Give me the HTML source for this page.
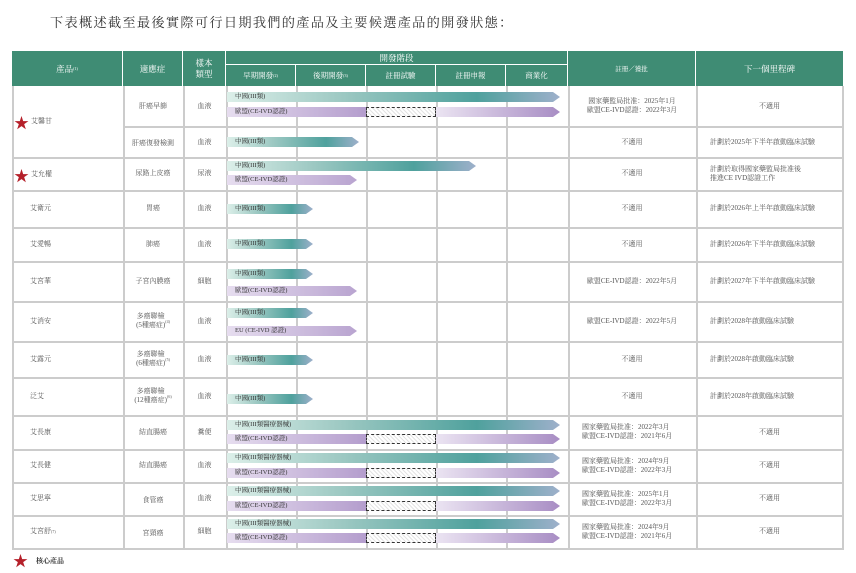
<!DOCTYPE html>
<html><head><meta charset="utf-8"><style>
*{margin:0;padding:0;box-sizing:border-box}
body{width:856px;height:573px;background:#fff;position:relative;overflow:hidden;font-family:"Liberation Serif","Noto Serif CJK SC","Noto Sans CJK TC",serif;color:#444}
.a{position:absolute}
.t{position:absolute;display:flex;align-items:center;justify-content:center;text-align:center;font-size:7px;line-height:9px;color:#555}
.l{justify-content:flex-start;text-align:left}
.h{position:absolute;background:#3f8c74;color:#fff;display:flex;align-items:center;justify-content:center;font-size:8.5px;border-right:1.5px solid #fff}
.v{position:absolute;top:86px;height:464px;width:1.5px;background:#ccc}
.hl{position:absolute;height:1.5px;background:#ccc;left:12px;width:831px}
.bar{position:absolute;height:10px;font-size:6.5px;line-height:10px;padding-left:8px;color:#333;white-space:nowrap}
.c{background:linear-gradient(90deg,#dcefe9 0%,#9cc8c2 35%,#4fa19d 75%,#9eb0cb 100%);clip-path:polygon(0 0,calc(100% - 7px) 0,100% 50%,calc(100% - 7px) 100%,0 100%)}
.p{background:linear-gradient(90deg,#e6ddef 0%,#b9a4d0 100%);clip-path:polygon(0 0,calc(100% - 7px) 0,100% 50%,calc(100% - 7px) 100%,0 100%)}
.p1{background:linear-gradient(90deg,#e6ddef 0%,#b49dcd 100%)}
.p2{background:linear-gradient(90deg,#ebe4f2 0%,#a88dc4 100%);clip-path:polygon(0 0,calc(100% - 7px) 0,100% 50%,calc(100% - 7px) 100%,0 100%)}
.d{position:absolute;height:10px;border:1px dashed #333;background:repeating-linear-gradient(45deg,#e4e4e4 0 1px,#fff 1px 3px)}
.star{color:#b5202a;font-size:15px;position:absolute}
</style></head><body>
<div class="a" style="left:50px;top:12px;white-space:nowrap;font-size:13.2px;color:#333;letter-spacing:1.3px;font-family:'Liberation Serif','Noto Serif CJK SC',serif">下表概述截至最後實際可行日期我們的產品及主要候選產品的開發狀態：</div>

<div class="h" style="left:12px;top:51px;width:111px;height:35px">產品<sup style="font-size:4px">(1)</sup></div>
<div class="h" style="left:123px;top:51px;width:60px;height:35px">適應症</div>
<div class="h" style="left:183px;top:51px;width:43px;height:35px;line-height:11px;text-align:center">樣本<br>類型</div>
<div class="h" style="left:226px;top:51px;width:342px;height:14px;border-bottom:1.5px solid #fff">開發階段</div>
<div class="h" style="left:226px;top:65px;width:70px;height:21px;font-size:7.5px">早期開發<sup style="font-size:4px">(2)</sup></div>
<div class="h" style="left:296px;top:65px;width:70px;height:21px;font-size:7.5px">後期開發<sup style="font-size:4px">(3)</sup></div>
<div class="h" style="left:366px;top:65px;width:70px;height:21px;font-size:7.5px">註冊試驗</div>
<div class="h" style="left:436px;top:65px;width:70px;height:21px;font-size:7.5px">註冊申報</div>
<div class="h" style="left:506px;top:65px;width:62px;height:21px;font-size:7.5px">商業化</div>
<div class="h" style="left:568px;top:51px;width:128px;height:35px;font-size:6.5px">註冊／獲批</div>
<div class="h" style="left:696px;top:51px;width:147px;height:35px;border-right:none">下一個里程碑</div>

<div class="v" style="left:12px"></div><div class="v" style="left:123px"></div><div class="v" style="left:183px"></div>
<div class="v" style="left:226px"></div><div class="v" style="left:296px"></div><div class="v" style="left:366px"></div>
<div class="v" style="left:436px"></div><div class="v" style="left:506px"></div><div class="v" style="left:568px"></div>
<div class="v" style="left:696px"></div><div class="v" style="left:842px"></div>
<div class="hl" style="top:126px;left:123px;width:720px"></div>
<div class="hl" style="top:157px"></div><div class="hl" style="top:190px"></div><div class="hl" style="top:227px"></div>
<div class="hl" style="top:261px"></div><div class="hl" style="top:301px"></div><div class="hl" style="top:341px"></div>
<div class="hl" style="top:377px"></div><div class="hl" style="top:415px"></div><div class="hl" style="top:449px"></div>
<div class="hl" style="top:482px"></div><div class="hl" style="top:515px"></div><div class="hl" style="top:548px"></div>

<div class="star" style="left:14px;top:112px">★</div><div class="t l" style="left:31px;top:114px;height:14px">艾馨甘</div>
<div class="star" style="left:14px;top:165px">★</div><div class="t l" style="left:31px;top:167px;height:14px">艾允權</div>
<div class="t l" style="left:30px;top:190px;height:37px">艾衛元</div>
<div class="t l" style="left:30px;top:227px;height:34px">艾愛暢</div>
<div class="t l" style="left:30px;top:261px;height:40px">艾宮華</div>
<div class="t l" style="left:30px;top:301px;height:40px">艾消安</div>
<div class="t l" style="left:30px;top:341px;height:36px">艾露元</div>
<div class="t l" style="left:30px;top:377px;height:38px">泛艾</div>
<div class="t l" style="left:30px;top:415px;height:34px">艾長康</div>
<div class="t l" style="left:30px;top:449px;height:33px">艾長健</div>
<div class="t l" style="left:30px;top:482px;height:33px">艾思寧</div>
<div class="t l" style="left:30px;top:515px;height:33px">艾宮舒<sup style="font-size:4px">(7)</sup></div>

<div class="t" style="left:123px;width:60px;top:86px;height:40px">肝癌早篩</div>
<div class="t" style="left:123px;width:60px;top:126px;height:35px">肝癌復發檢測</div>
<div class="t" style="left:123px;width:60px;top:157px;height:33px">尿路上皮癌</div>
<div class="t" style="left:123px;width:60px;top:190px;height:37px">胃癌</div>
<div class="t" style="left:123px;width:60px;top:227px;height:34px">肺癌</div>
<div class="t" style="left:123px;width:60px;top:261px;height:40px">子宮內膜癌</div>
<div class="t" style="left:123px;width:60px;top:301px;height:40px">多癌聯檢<br>(5種癌症)<sup style="font-size:4px">(4)</sup></div>
<div class="t" style="left:123px;width:60px;top:341px;height:36px">多癌聯檢<br>(6種癌症)<sup style="font-size:4px">(5)</sup></div>
<div class="t" style="left:123px;width:60px;top:377px;height:38px">多癌聯檢<br>(12種癌症)<sup style="font-size:4px">(6)</sup></div>
<div class="t" style="left:123px;width:60px;top:415px;height:34px">結直腸癌</div>
<div class="t" style="left:123px;width:60px;top:449px;height:33px">結直腸癌</div>
<div class="t" style="left:123px;width:60px;top:482px;height:37px">食管癌</div>
<div class="t" style="left:123px;width:60px;top:515px;height:37px">宮頸癌</div>

<div class="t" style="left:183px;width:43px;top:86px;height:40px">血液</div>
<div class="t" style="left:183px;width:43px;top:126px;height:33px">血液</div>
<div class="t" style="left:183px;width:43px;top:157px;height:33px">尿液</div>
<div class="t" style="left:183px;width:43px;top:190px;height:37px">血液</div>
<div class="t" style="left:183px;width:43px;top:227px;height:34px">血液</div>
<div class="t" style="left:183px;width:43px;top:261px;height:40px">細胞</div>
<div class="t" style="left:183px;width:43px;top:301px;height:40px">血液</div>
<div class="t" style="left:183px;width:43px;top:341px;height:36px">血液</div>
<div class="t" style="left:183px;width:43px;top:377px;height:38px">血液</div>
<div class="t" style="left:183px;width:43px;top:415px;height:34px">糞便</div>
<div class="t" style="left:183px;width:43px;top:449px;height:33px">血液</div>
<div class="t" style="left:183px;width:43px;top:482px;height:33px">血液</div>
<div class="t" style="left:183px;width:43px;top:515px;height:33px">細胞</div>

<div class="bar c" style="left:227px;top:92px;width:333px">中國(III類)</div>
<div class="bar p1" style="left:227px;top:107px;width:139px">歐盟(CE-IVD認證)</div>
<div class="d" style="left:366px;top:107px;width:70px"></div>
<div class="bar p2" style="left:436px;top:107px;width:124px"></div>
<div class="bar c" style="left:227px;top:137px;width:132px">中國(III類)</div>
<div class="bar c" style="left:227px;top:161px;width:249px">中國(III類)</div>
<div class="bar p" style="left:227px;top:175px;width:130px">歐盟(CE-IVD認證)</div>
<div class="bar c" style="left:227px;top:204px;width:86px">中國(III類)</div>
<div class="bar c" style="left:227px;top:239px;width:86px">中國(III類)</div>
<div class="bar c" style="left:227px;top:269px;width:86px">中國(III類)</div>
<div class="bar p" style="left:227px;top:286px;width:130px">歐盟(CE-IVD認證)</div>
<div class="bar c" style="left:227px;top:308px;width:86px">中國(III類)</div>
<div class="bar p" style="left:227px;top:326px;width:130px">EU (CE-IVD 認證)</div>
<div class="bar c" style="left:227px;top:355px;width:86px">中國(III類)</div>
<div class="bar c" style="left:227px;top:394px;width:86px">中國(III類)</div>

<div class="bar c" style="left:227px;top:420px;width:333px">中國(III類醫療器械)</div>
<div class="bar p1" style="left:227px;top:434px;width:139px">歐盟(CE-IVD認證)</div>
<div class="d" style="left:366px;top:434px;width:70px"></div>
<div class="bar p2" style="left:436px;top:434px;width:124px"></div>
<div class="bar c" style="left:227px;top:453px;width:333px">中國(III類醫療器械)</div>
<div class="bar p1" style="left:227px;top:468px;width:139px">歐盟(CE-IVD認證)</div>
<div class="d" style="left:366px;top:468px;width:70px"></div>
<div class="bar p2" style="left:436px;top:468px;width:124px"></div>
<div class="bar c" style="left:227px;top:486px;width:333px">中國(III類醫療器械)</div>
<div class="bar p1" style="left:227px;top:501px;width:139px">歐盟(CE-IVD認證)</div>
<div class="d" style="left:366px;top:501px;width:70px"></div>
<div class="bar p2" style="left:436px;top:501px;width:124px"></div>
<div class="bar c" style="left:227px;top:519px;width:333px">中國(III類醫療器械)</div>
<div class="bar p1" style="left:227px;top:533px;width:139px">歐盟(CE-IVD認證)</div>
<div class="d" style="left:366px;top:533px;width:70px"></div>
<div class="bar p2" style="left:436px;top:533px;width:124px"></div>

<div class="t" style="left:568px;width:128px;top:86px;height:40px">國家藥監局批准：2025年1月<br>歐盟CE-IVD認證：2022年3月</div>
<div class="t" style="left:568px;width:128px;top:126px;height:33px">不適用</div>
<div class="t" style="left:568px;width:128px;top:157px;height:33px">不適用</div>
<div class="t" style="left:568px;width:128px;top:190px;height:37px">不適用</div>
<div class="t" style="left:568px;width:128px;top:227px;height:34px">不適用</div>
<div class="t" style="left:568px;width:128px;top:261px;height:40px">歐盟CE-IVD認證：2022年5月</div>
<div class="t" style="left:568px;width:128px;top:301px;height:40px">歐盟CE-IVD認證：2022年5月</div>
<div class="t" style="left:568px;width:128px;top:341px;height:36px">不適用</div>
<div class="t" style="left:568px;width:128px;top:377px;height:38px">不適用</div>
<div class="t l" style="left:582px;top:415px;height:34px">國家藥監局批准：2022年3月<br>歐盟CE-IVD認證：2021年6月</div>
<div class="t l" style="left:582px;top:449px;height:33px">國家藥監局批准：2024年9月<br>歐盟CE-IVD認證：2022年3月</div>
<div class="t l" style="left:582px;top:482px;height:33px">國家藥監局批准：2025年1月<br>歐盟CE-IVD認證：2022年3月</div>
<div class="t l" style="left:582px;top:515px;height:33px">國家藥監局批准：2024年9月<br>歐盟CE-IVD認證：2021年6月</div>

<div class="t" style="left:696px;width:147px;top:86px;height:40px">不適用</div>
<div class="t l" style="left:710px;top:126px;height:33px">計劃於2025年下半年啟動臨床試驗</div>
<div class="t l" style="left:710px;top:157px;height:33px">計劃於取得國家藥監局批准後<br>推進CE IVD認證工作</div>
<div class="t l" style="left:710px;top:190px;height:37px">計劃於2026年上半年啟動臨床試驗</div>
<div class="t l" style="left:710px;top:227px;height:34px">計劃於2026年下半年啟動臨床試驗</div>
<div class="t l" style="left:710px;top:261px;height:40px">計劃於2027年下半年啟動臨床試驗</div>
<div class="t l" style="left:710px;top:301px;height:40px">計劃於2028年啟動臨床試驗</div>
<div class="t l" style="left:710px;top:341px;height:36px">計劃於2028年啟動臨床試驗</div>
<div class="t l" style="left:710px;top:377px;height:38px">計劃於2028年啟動臨床試驗</div>
<div class="t" style="left:696px;width:147px;top:415px;height:34px">不適用</div>
<div class="t" style="left:696px;width:147px;top:449px;height:33px">不適用</div>
<div class="t" style="left:696px;width:147px;top:482px;height:33px">不適用</div>
<div class="t" style="left:696px;width:147px;top:515px;height:33px">不適用</div>

<div class="star" style="left:13px;top:550px">★</div>
<div class="t l" style="left:36px;top:556px;height:10px;font-weight:bold;color:#333">核心產品</div>
</body></html>
